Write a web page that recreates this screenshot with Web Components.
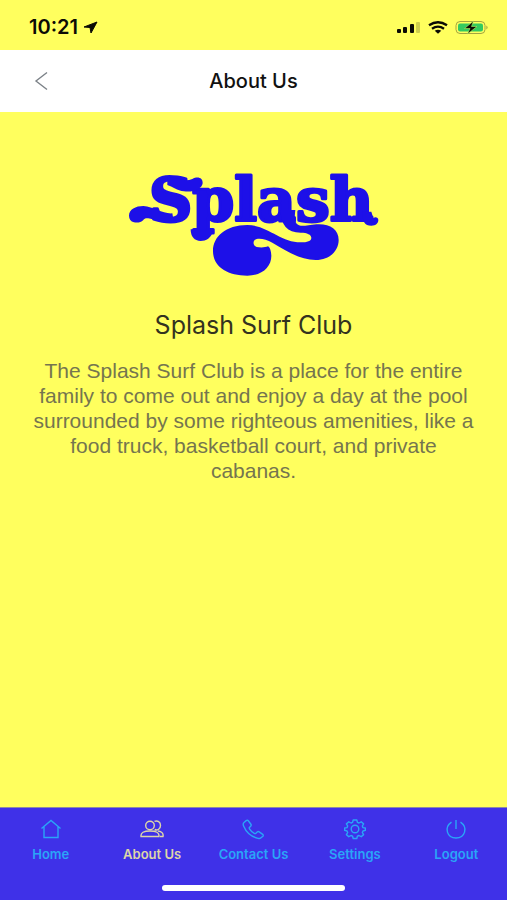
<!DOCTYPE html>
<html lang="en">
<head>
  <meta charset="utf-8">
  <meta name="viewport" content="width=device-width, initial-scale=1">
  <title>About Us</title>
  <style>
    body {
      margin: 0;
      font-family: Inter, 'Liberation Sans', sans-serif;
      color: #111;
      background-color: #ffff5e;
    }
  </style>
</head>
<body>
  <club-app>
    <status-bar slot="top" time="10:21"></status-bar>
    <page-header slot="top">About Us</page-header>
    <about-club>
      <splash-logo slot="logo"></splash-logo>
      <span slot="name">Splash Surf Club</span>
      The Splash Surf Club is a place for the entire family to come out and enjoy a day at the pool surrounded by some righteous amenities, like a food truck, basketball court, and private cabanas.
    </about-club>
    <tab-bar slot="bottom">
      <tab-item icon="home">Home</tab-item>
      <tab-item icon="people" active>About Us</tab-item>
      <tab-item icon="call">Contact Us</tab-item>
      <tab-item icon="settings">Settings</tab-item>
      <tab-item icon="power">Logout</tab-item>
    </tab-bar>
  </club-app>

  <script>
    class ClubApp extends HTMLElement {
      constructor() {
        super();
        this.attachShadow({ mode: 'open' });
      }

      connectedCallback() {
        this.shadowRoot.innerHTML = `
          <style>
            :host {
              display: flex;
              flex-direction: column;
              min-height: 100vh;
            }
            main {
              flex: 1;
            }
          </style>
          <slot name="top"></slot>
          <main><slot></slot></main>
          <slot name="bottom"></slot>`;
      }
    }

    class StatusBar extends HTMLElement {
      constructor() {
        super();
        this.attachShadow({ mode: 'open' });
      }

      connectedCallback() {
        this.shadowRoot.innerHTML = `
          <style>
            :host {
              display: flex;
              align-items: center;
              justify-content: space-between;
              box-sizing: border-box;
              height: 50px;
              padding: 4px 18px 0 29px;
              color: #0b0b05;
            }
            div {
              display: flex;
              align-items: center;
              gap: 5px;
            }
            .signals {
              gap: 7px;
            }
            time {
              font-size: 20px;
              font-weight: 600;
              line-height: 24px;
            }
          </style>
          <div>
            <time>${this.getAttribute('time')}</time>
            <svg width="15" height="13" viewBox="0 0 15 13" aria-hidden="true">
              <path fill="currentColor" stroke="currentColor" stroke-linejoin="round" d="M14 1 8 12 7 6.500 1 6Z"/>
            </svg>
          </div>
          <div class="signals">
            <svg width="24" height="13" viewBox="0 0 24 13" aria-hidden="true">
              <g fill="currentColor">
                <rect x="0" y="8" width="4" height="4" rx="1"/>
                <rect x="6" y="6" width="4" height="6" rx="1"/>
                <rect x="13" y="3" width="4" height="9" rx="1"/>
                <rect x="19" y="1" width="4" height="11" rx="1" opacity=".2"/>
              </g>
            </svg>
            <svg width="20" height="13" viewBox="0 0 20 13" aria-hidden="true">
              <g fill="none" stroke="currentColor" stroke-width="2.300">
                <path d="M1 4.300Q10-1.800 19 4.300"/>
                <path d="M4 7.700Q10 3.400 16 7.700"/>
              </g>
              <path fill="currentColor" d="M6.700 9.800Q10 7.600 13.300 9.800L10 12.700Z"/>
            </svg>
            <svg width="34" height="15" viewBox="0 0 34 15" aria-hidden="true">
              <rect x="1" y="1.500" width="29" height="12" rx="4" fill="none" stroke="#a5a540"/>
              <rect x="3" y="3.500" width="25" height="8" rx="2" fill="#34cb5f"/>
              <path d="M31.500 5.500q2 2 0 4Z" fill="#8c8c38"/>
              <path d="M18.500 1 9.500 8.500h5.500L12.500 14l9.500-7.500H16.500Z" fill="#0b0b05" stroke="#b6ee5d" stroke-width=".6"/>
            </svg>
          </div>`;
      }
    }

    class PageHeader extends HTMLElement {
      constructor() {
        super();
        this.attachShadow({ mode: 'open' });
        this.onBackClick = () =>
          this.dispatchEvent(new CustomEvent('on-back', { bubbles: true }));
      }

      connectedCallback() {
        this.shadowRoot.innerHTML = `
          <style>
            :host {
              display: grid;
              grid-template-columns: 1fr auto 1fr;
              align-items: center;
              box-sizing: border-box;
              height: 62px;
              padding: 0 24px;
              background-color: #fff;
            }
            button {
              display: flex;
              justify-self: start;
              border: 0;
              padding: 8px;
              background: none;
              color: #7c8288;
            }
            h1 {
              margin: 0;
              font-size: 20px;
              font-weight: 500;
              line-height: 24px;
            }
          </style>
          <button type="button" aria-label="Back">
            <svg width="18" height="20" viewBox="0 0 18 20" fill="none" stroke="currentColor" stroke-width="1.400">
              <path d="M15 1.500 4 10l11 8.500"/>
            </svg>
          </button>
          <h1><slot></slot></h1>`;
        this.shadowRoot
          .querySelector('button')
          .addEventListener('click', this.onBackClick);
      }

      disconnectedCallback() {
        this.shadowRoot
          .querySelector('button')
          .removeEventListener('click', this.onBackClick);
      }
    }

    class SplashLogo extends HTMLElement {
      constructor() {
        super();
        this.attachShadow({ mode: 'open' });
      }

      connectedCallback() {
        // the word is live text, the swashes hang off its letters
        this.shadowRoot.innerHTML = `
          <style>
            :host {
              display: block;
              color: #1d10e8;
            }
            svg {
              display: block;
              margin: 0 auto;
            }
            text {
              font: bold 60px 'DejaVu Serif', serif;
            }
          </style>
          <svg width="260" height="130" viewBox="0 -20 260 130" fill="currentColor">
            <text x="25" y="51" stroke="currentColor" stroke-width="3" stroke-linejoin="round">Splash</text>
            <g transform="scale(.33333)">
              <path d="M470 120C470 165 490 188 530 188C550 188 562 194 562 203C562 213 550 217 530 217C470 217 430 165 370 165C305 165 267 200 267 243C267 290 310 317 370 317C415 317 442 290 442 258C442 245 438 232 432 229C424 233 408 233 398 231C388 228 386 216 392 210C402 203 425 207 445 218C490 245 530 270 575 270C620 270 644 240 644 210C644 180 620 163 585 163C560 163 550 169 530 167C508 163 512 140 514 120Z"/>
              <path d="M15 137C15 118 35 108 58 108C90 110 115 132 145 130L150 158C125 160 105 155 85 148C70 143 62 144 58 150C50 160 36 158 30 157C20 155 15 147 15 137Z"/>
              <path d="M130 20C155 22 180 38 205 27C222 18 237 24 236 40C234 58 205 68 180 64C160 62 145 50 130 45Z"/>
              <path d="M200 178H266V186C262 203 246 213 230 213C211 213 200 200 200 178Z"/>
              <path d="M715 125C715 155 722 167 742 167C756 167 763 159 763 150C763 142 753 139 748 145L742 125Z"/>
            </g>
          </svg>`;
      }
    }

    class AboutClub extends HTMLElement {
      constructor() {
        super();
        this.attachShadow({ mode: 'open' });
      }

      connectedCallback() {
        this.shadowRoot.innerHTML = `
          <style>
            :host {
              display: block;
              padding: 38px 26px 24px;
              text-align: center;
            }
            h2 {
              margin: 30px 0 18px;
              font-size: 25px;
              font-weight: 400;
              line-height: 30px;
              color: #33331f;
            }
            p {
              margin: 0;
              font-family: 'Liberation Sans', Arial, sans-serif;
              font-size: 21px;
              line-height: 25px;
              color: #75754f;
            }
          </style>
          <slot name="logo"></slot>
          <h2><slot name="name"></slot></h2>
          <p><slot></slot></p>`;
      }
    }

    class TabBar extends HTMLElement {
      constructor() {
        super();
        this.attachShadow({ mode: 'open' });
      }

      connectedCallback() {
        this.shadowRoot.innerHTML = `
          <style>
            :host {
              display: flex;
              flex-direction: column;
              justify-content: space-between;
              box-sizing: border-box;
              height: 93px;
              padding: 10px 0 9px;
              border-top: 1px solid #8f88a4;
              background-color: #3f31e8;
            }
            nav {
              display: grid;
              grid-template-columns: repeat(5, 1fr);
            }
            .indicator {
              width: 36%;
              height: 6px;
              margin: 0 auto;
              border-radius: 3px;
              background-color: #fff;
            }
          </style>
          <nav aria-label="Main"><slot></slot></nav>
          <div class="indicator"></div>`;
      }
    }

    const ICONS = {
      home: '<path d="M2.500 10.500 12 2.500l9.500 8M5 8.800V19.500H19V8.800"/>',
      people: `
        <circle cx="10" cy="7.500" r="4.300"/>
        <path d="M1 18.500c-.6-4 3-5.500 9-5.500s9.600 1.500 9 5.500ZM14.500 3.400c3-1.400 6 .8 6 4.100s-3 5.400-5.800 4M18 13c4 .6 5.600 2.500 5 5.500H20"/>`,
      call: '<path d="M3 4.500 5.200 2.600c.7-.6 1.500-.5 2.100.2l2.600 3.400c.5.7.4 1.400-.2 2L8.600 9.300c-.5.5-.5 1-.1 1.600 1.200 2 2.700 3.400 4.800 4.500.6.3 1.100.3 1.600-.2l1.300-1.200c.6-.5 1.300-.6 2-.1l3.500 2.400c.7.5.8 1.300.2 2L20 19.700c-.8.8-1.800 1-3 .7C10.500 18.800 5 13.800 2.600 8 2 6.600 2 5.400 3 4.500Z"/>',
      settings: `
        <circle cx="12" cy="11" r="3.800"/>
        <path stroke-linejoin="round" d="M10.200 2h3.600l.6 2.300 1.600.7 2.200-1.200 2.400 2.100-1.300 2.100.7 1.600 2.300.4v2.400l-2.300.6-.7 1.500 1.300 2.100-2.400 2.100-2.200-1.200-1.600.7-.6 2.300h-3.600l-.6-2.300-1.600-.7-2.200 1.200-2.400-2.100 1.300-2.100-.7-1.500-2.300-.6v-2.400l2.300-.4.7-1.600-1.300-2.100 2.400-2.100L8 5l1.600-.7Z"/>`,
      power: '<path d="M12 2v9M7.500 4.200C-.3 9.500 3 20 12 20S24.300 9.500 16.500 4.200"/>'
    };

    class TabItem extends HTMLElement {
      constructor() {
        super();
        this.attachShadow({ mode: 'open' });
      }

      connectedCallback() {
        this.shadowRoot.innerHTML = `
          <style>
            :host {
              display: block;
              color: #2aa5f7;
            }
            :host([active]) {
              color: #ddd6a8;
            }
            a {
              display: flex;
              flex-direction: column;
              align-items: center;
              gap: 6px;
              color: inherit;
              font-size: 13px;
              font-weight: 600;
              line-height: 16px;
              text-decoration: none;
              white-space: nowrap;
            }
          </style>
          <a href="#${this.getAttribute('icon')}" ${this.hasAttribute('active') ? 'aria-current="page"' : ''}>
            <svg width="24" height="22" viewBox="0 0 24 22" fill="none" stroke="currentColor" stroke-width="1.400" aria-hidden="true">
              ${ICONS[this.getAttribute('icon')]}
            </svg>
            <slot></slot>
          </a>`;
      }
    }

    window.customElements.define('club-app', ClubApp);
    window.customElements.define('status-bar', StatusBar);
    window.customElements.define('page-header', PageHeader);
    window.customElements.define('splash-logo', SplashLogo);
    window.customElements.define('about-club', AboutClub);
    window.customElements.define('tab-bar', TabBar);
    window.customElements.define('tab-item', TabItem);
  </script>
</body>
</html>
